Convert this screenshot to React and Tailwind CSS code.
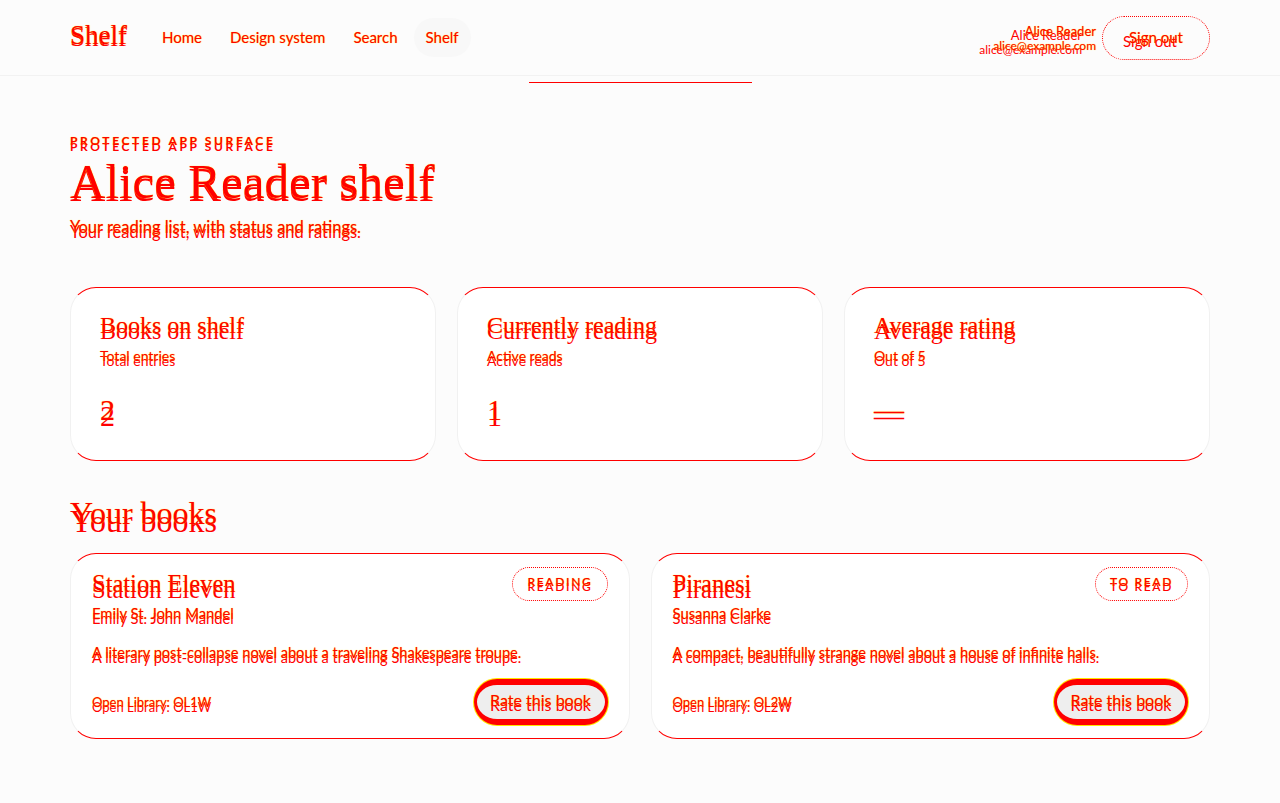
const serif = "font-['Liberation_Serif',serif]"
const sans = "font-['Lato','Open_Sans',sans-serif]"
const red = 'text-[#ff0000]'
const dbl = '[text-shadow:0_0_1px_#ffe600,0_6px_0_#ff0000]'
const dblS = '[text-shadow:0_0_1px_#ffe600,0_5px_0_#ff0000]'
const dblL = '[text-shadow:0_0_1px_#ffe600,0_3px_0_#ff0000]'

function StatCard({ title, sub, value }) {
  return (
    <div className="flex-1 h-[174px] rounded-[26px] bg-white border border-[#f1f1f1] border-t-[#ff0000] border-b-[#ff0000] px-[29px] pt-[23px]">
      <div className={`${serif} ${red} ${dbl} text-[24px] leading-[28px]`}>{title}</div>
      <div className={`${sans} ${red} ${dblS} text-[14px] leading-[16px] mt-[9px]`}>{sub}</div>
      <div className={`${serif} ${red} ${dbl} text-[30px] leading-[32px] mt-[30px]`}>{value}</div>
    </div>
  )
}

function BookCard({ title, author, status, desc, ol }) {
  return (
    <div className="flex-1 h-[186px] rounded-[26px] bg-white border border-[#f1f1f1] border-t-[#ff0000] border-b-[#ff0000] px-[21px] pt-[13px] flex flex-col">
      <div className="flex items-start justify-between">
        <div>
          <div className={`${serif} ${red} ${dbl} text-[24.5px] leading-[26px] mt-[4px]`}>{title}</div>
          <div className={`${sans} ${red} ${dblS} text-[14.8px] leading-[16px] mt-[8px]`}>{author}</div>
        </div>
        <span className={`${sans} ${red} ${dblS} text-[12px] font-semibold tracking-[0.14em] leading-[14px] px-[14px] py-[7px] pb-[11px] rounded-full border border-dotted border-[#ff0000]`}>
          {status}
        </span>
      </div>
      <div className={`${sans} ${red} ${dblS} text-[14.6px] leading-[16px] mt-[24px]`}>{desc}</div>
      <div className="flex items-center justify-between mt-[18px]">
        <div className={`${sans} ${red} ${dblS} text-[13px] leading-[16px]`}>{ol}</div>
        <button className={`${sans} ${red} ${dblS} text-[16px] leading-[16px] pb-[5px] w-[134px] h-[46px] rounded-full bg-[#eeeeee] border-y-[6px] border-x-[3px] border-[#ff0000] ring-1 ring-[#ffe600]`}>
          Rate this book
        </button>
      </div>
    </div>
  )
}

export default function App() {
  return (
    <div className={`min-h-[803px] bg-[#fcfcfc] ${sans}`}>
      <header className="h-[76px] border-b border-[#f2f2f2] px-[70px] flex items-center justify-between">
        <div className="flex items-center">
          <span className={`${serif} ${red} [text-shadow:0_0_1px_#ffe600,0_2px_0_#ff0000] text-[27px] mr-[35px] -mt-[4px]`}>Shelf</span>
          <nav className={`flex items-center gap-[28px] text-[15px] font-normal ${red} [text-shadow:0_0_1px_#ffe600]`}>
            <span>Home</span>
            <span>Design system</span>
            <span>Search</span>
            <span className="bg-[#f8f8f8] rounded-full px-[12px] py-[8px] -ml-[12px]">Shelf</span>
          </nav>
        </div>
        <div className="flex items-center gap-[6px]">
          <div className={`text-right ${red} [text-shadow:0_0_1px_#ffe600,-14px_4px_0_#ff0000]`}>
            <div className="text-[13px] leading-[16px]">Alice Reader</div>
            <div className="text-[12px] leading-[14px]">alice@example.com</div>
          </div>
          <button className={`${red} [text-shadow:0_0_1px_#ffe600,-6px_4px_0_#ff0000] text-[15px] w-[108px] h-[44px] rounded-full border border-dotted border-[#ff0000]`}>
            Sign out
          </button>
        </div>
      </header>
      <div className="flex justify-center mt-[6px]">
        <div className="w-[223px] h-px bg-[#ff0000]" />
      </div>

      <main className="px-[70px] pt-[51px]">
        <div className={`${red} [text-shadow:0_0_1px_#ffe600,0_6px_0_#ff0000] text-[12px] font-bold tracking-[0.22em] leading-[14px]`}>
          PROTECTED APP SURFACE
        </div>
        <h1 className={`${serif} ${red} ${dblL} text-[49px] leading-[56px] mt-[6px]`}>Alice Reader shelf</h1>
        <p className={`${red} ${dblS} text-[16.5px] leading-[18px] mt-[8px]`}>Your reading list, with status and ratings.</p>

        <div className="flex gap-[21px] mt-[51px]">
          <StatCard title="Books on shelf" sub="Total entries" value="2" />
          <StatCard title="Currently reading" sub="Active reads" value="1" />
          <StatCard title="Average rating" sub="Out of 5" value="—" />
        </div>

        <h2 className={`${serif} ${red} [text-shadow:0_0_1px_#ffe600,0_8px_0_#ff0000] text-[32px] leading-[36px] mt-[34px]`}>Your books</h2>

        <div className="flex gap-[21px] mt-[22px]">
          <BookCard
            title="Station Eleven"
            author="Emily St. John Mandel"
            status="READING"
            desc="A literary post-collapse novel about a traveling Shakespeare troupe."
            ol="Open Library: OL1W"
          />
          <BookCard
            title="Piranesi"
            author="Susanna Clarke"
            status="TO READ"
            desc="A compact, beautifully strange novel about a house of infinite halls."
            ol="Open Library: OL2W"
          />
        </div>
      </main>
    </div>
  )
}
